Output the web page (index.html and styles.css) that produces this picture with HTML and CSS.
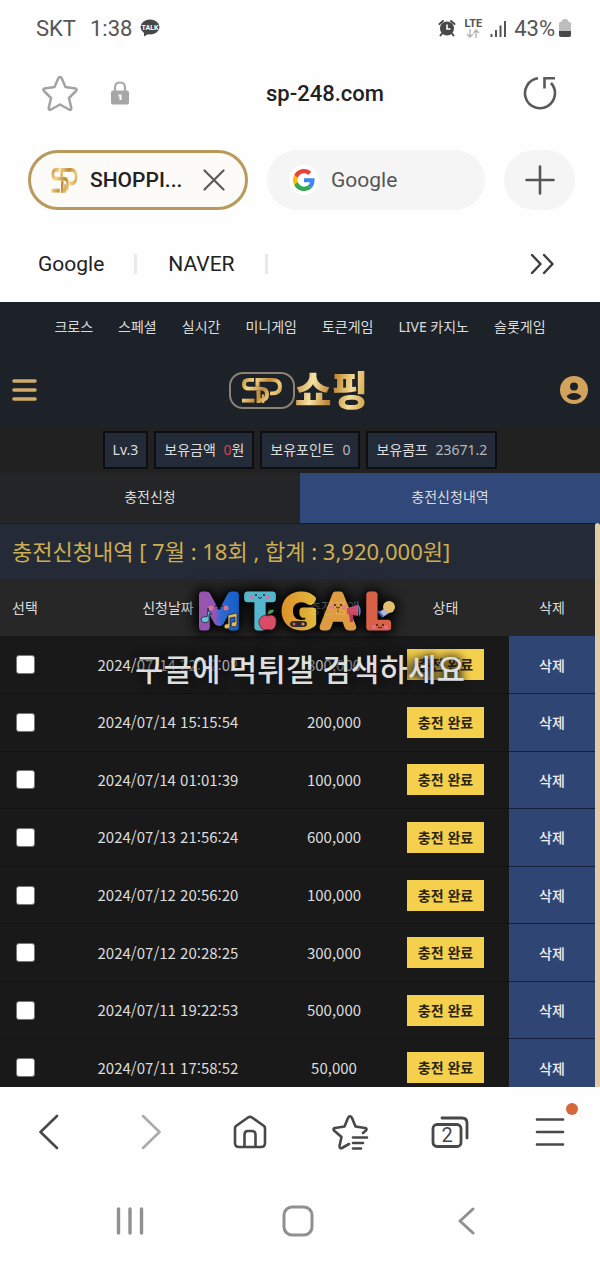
FILE: index.html
```html
<!DOCTYPE html>
<html lang="ko">

<head>
  <meta charset="UTF-8">
  <meta name="viewport" content="width=device-width, initial-scale=1.0">
  <title>SHOPPING</title>

  <link rel="stylesheet" href="styles.css">
</head>

<body>
  <!-- shared logo mark and gradients -->
  <svg class="defs" width="0" height="0" aria-hidden="true">
    <defs>
      <linearGradient id="gold" gradientUnits="userSpaceOnUse" x1="0" y1="0" x2="42" y2="28">
        <stop offset="0" stop-color="#b5812f"/>
        <stop offset=".25" stop-color="#f3d78c"/>
        <stop offset=".5" stop-color="#c08a35"/>
        <stop offset=".7" stop-color="#efcd7c"/>
        <stop offset="1" stop-color="#a8752a"/>
      </linearGradient>
      <symbol id="mark" viewBox="0 0 42 28" preserveAspectRatio="none">
        <g fill="none" stroke="url(#gold)" stroke-width="4">
          <path d="M13 3H8Q3 3 3 7.500Q3 12 8 12H20Q26 12 26 18Q26 24 20 24H19"/>
          <path d="M1 24.500H13.500"/>
          <path d="M16.500 10V3H31Q39 3 39 10Q39 17 31 17H29"/>
          <path d="M17.500 14V27"/>
          <path d="M22 27V18" stroke-width="2.500"/>
        </g>
      </symbol>
    </defs>
  </svg>

  <div class="phone">
    <div class="status-bar">
      <span>SKT</span>
      <span>1:38</span>
      <svg class="talk" width="20" height="18" viewBox="0 0 20 18">
        <ellipse cx="10" cy="8" rx="9.500" ry="7.500" fill="#484848"/>
        <path d="M4 12l0 5.500 5-3z" fill="#484848"/>
        <text x="10" y="10.500" text-anchor="middle">TALK</text>
      </svg>
      <div class="status-right">
        <svg width="18" height="18" viewBox="0 0 18 18">
          <circle cx="9" cy="9.500" r="7" fill="#484848"/>
          <path d="M1.500 5L5 2M16.500 5L13 2M4 14.500L2.500 16.500M14 14.500L15.500 16.500" stroke="#484848" stroke-width="2" stroke-linecap="round"/>
          <path d="M9 5.500V10H12.500" fill="none" stroke="#fff" stroke-width="1.600"/>
        </svg>
        <div class="lte">
          <span>LTE</span>
          <svg width="14" height="9" viewBox="0 0 14 9" fill="none" stroke="#b0b0b0" stroke-width="1.300">
            <path d="M4 0V8M1 5L4 8L7 5M10 9V1M7.500 4L10 1L13 4"/>
          </svg>
        </div>
        <svg width="16" height="17" viewBox="0 0 16 17" stroke="#555" stroke-width="2">
          <path d="M1.500 17V14M6 17V10M10.500 17V5.500M15 17V1"/>
        </svg>
        <span>43%</span>
        <svg width="12" height="18" viewBox="0 0 12 18">
          <path d="M3 2Q3 0 6 0Q9 0 9 2L12 4V12H0V4Z" fill="#bdbdbd"/>
          <path d="M0 12H12V16Q12 18 10 18H2Q0 18 0 16Z" fill="#484848"/>
        </svg>
      </div>
    </div>

    <div class="address-bar">
      <button type="button" aria-label="북마크">
        <svg width="38" height="38" viewBox="0 0 38 38" fill="none" stroke="#a3a3a3" stroke-width="2.500" stroke-linejoin="round">
          <path d="M19 3Q20.200 3 20.800 4.500L24.500 13L34.500 14.500Q36.500 15.200 35 17L28 24L30.300 34Q30.300 36.500 28 35.500L19 30.500L10 35.500Q7.700 36.500 7.700 34L10 24L3 17Q1.500 15.200 3.500 14.500L13.500 13L17.200 4.500Q17.800 3 19 3Z"/>
        </svg>
      </button>
      <svg class="lock" width="18" height="24" viewBox="0 0 18 24">
        <path d="M4 11V6.500Q4 1.500 9 1.500Q14 1.500 14 6.500V11" fill="none" stroke="#a6a6a6" stroke-width="2"/>
        <rect x="0" y="9.500" width="18" height="14" rx="2" fill="#a6a6a6"/>
        <path d="M7.500 14.500H9.500V19" fill="none" stroke="#fff" stroke-width="2"/>
      </svg>
      <span class="url">sp-248.com</span>
      <button type="button" aria-label="새로고침">
        <svg width="36" height="36" viewBox="0 0 36 36" fill="none" stroke="#5a5a5a" stroke-width="2.600">
          <path d="M16 3.300A15 15 0 1 0 29 8"/>
          <path d="M33 3.200H22.500V13.500" stroke-linejoin="miter"/>
        </svg>
      </button>
    </div>

    <div class="browser-tabs">
      <button type="button" class="browser-tab current">
        <svg width="27" height="27"><use href="#mark" width="27" height="27"/></svg>
        <span>SHOPPI...</span>
        <svg class="close" width="22" height="22" viewBox="0 0 22 22" stroke="#5a5a5a" stroke-width="2.200" stroke-linecap="round">
          <path d="M1.500 1.500L20.500 20.500M20.500 1.500L1.500 20.500"/>
        </svg>
      </button>
      <button type="button" class="browser-tab">
        <span class="favicon">
          <svg width="22" height="22" viewBox="0 0 48 48">
            <path fill="#ea4335" d="M24 9.500c3.540 0 6.710 1.220 9.210 3.600l6.850-6.850C35.900 2.380 30.470 0 24 0 14.620 0 6.510 5.380 2.560 13.220l7.980 6.190C12.430 13.720 17.740 9.500 24 9.500z"/>
            <path fill="#4285f4" d="M46.980 24.550c0-1.570-.15-3.090-.38-4.550H24v9.020h12.940c-.58 2.960-2.260 5.480-4.780 7.180l7.730 6c4.510-4.180 7.090-10.360 7.090-17.650z"/>
            <path fill="#fbbc05" d="M10.530 28.590c-.48-1.450-.76-2.990-.76-4.590s.27-3.140.76-4.590l-7.980-6.190C.92 16.460 0 20.120 0 24s.92 7.540 2.560 10.780l7.970-6.190z"/>
            <path fill="#34a853" d="M24 48c6.480 0 11.930-2.130 15.890-5.810l-7.730-6c-2.150 1.450-4.920 2.300-8.160 2.300-6.260 0-11.570-4.220-13.470-9.910l-7.980 6.190C6.510 42.620 14.620 48 24 48z"/>
          </svg>
        </span>
        <span>Google</span>
      </button>
      <button type="button" class="new-tab" aria-label="새 탭">
        <svg width="30" height="30" viewBox="0 0 30 30" stroke="#555" stroke-width="2.600" stroke-linecap="round">
          <path d="M15 1.500V28.500M1.500 15H28.500"/>
        </svg>
      </button>
    </div>

    <div class="bookmarks">
      <a href="#">Google</a>
      <a href="#">NAVER</a>
      <button type="button" aria-label="더보기">
        <svg width="26" height="22" viewBox="0 0 26 22" fill="none" stroke="#3c3c3c" stroke-width="2.400" stroke-linecap="round" stroke-linejoin="round">
          <path d="M3 2L11.500 11L3 20M15 2L23.500 11L15 20"/>
        </svg>
      </button>
    </div>

    <main class="site">
      <nav class="site-nav">
        <a href="#">크로스</a>
        <a href="#">스페셜</a>
        <a href="#">실시간</a>
        <a href="#">미니게임</a>
        <a href="#">토큰게임</a>
        <a href="#">LIVE 카지노</a>
        <a href="#">슬롯게임</a>
      </nav>

      <header class="site-header">
        <button type="button" aria-label="메뉴">
          <svg width="25" height="22" viewBox="0 0 25 22" stroke="#cfac6b" stroke-width="3.600" stroke-linecap="round">
            <path d="M2 2H23M2 11H23M2 20H23"/>
          </svg>
        </button>
        <a href="#" class="logo">
          <span class="logo-mark"><svg width="42" height="27"><use href="#mark" width="42" height="27"/></svg></span>
          <span class="logo-name">쇼핑</span>
        </a>
        <button type="button" aria-label="내 정보">
          <svg width="28" height="28" viewBox="0 0 28 28">
            <circle cx="14" cy="14" r="14" fill="#d3a35c"/>
            <circle cx="14" cy="10.500" r="4" fill="#1d2229"/>
            <path d="M6.500 20.500Q9 17 14 17T21.500 20.500Q18.500 24 14 24T6.500 20.500Z" fill="#1d2229"/>
          </svg>
        </button>
      </header>

      <div class="user-info">
        <span>Lv.3</span>
        <span>보유금액 <b>0</b>원</span>
        <span>보유포인트 <i>0</i></span>
        <span>보유콤프 <i>23671.2</i></span>
      </div>

      <div class="site-tabs">
        <a href="#">충전신청</a>
        <a href="#" class="on">충전신청내역</a>
      </div>

      <section class="history">
        <div class="history-body">
          <h1>충전신청내역 [ 7월 : 18회 , 합계 : 3,920,000원]</h1>
          <table>
            <colgroup>
              <col class="col-check">
              <col class="col-date">
              <col class="col-amount">
              <col class="col-state">
              <col class="col-delete">
            </colgroup>
            <thead>
              <tr>
                <th>선택</th>
                <th>신청날짜</th>
                <th>충전금액</th>
                <th>상태</th>
                <th>삭제</th>
              </tr>
            </thead>
            <tbody>
              <tr>
                <td><input type="checkbox" aria-label="선택 1"></td>
                <td>2024/07/14 22:12:02</td>
                <td>800,000</td>
                <td><span class="done">충전 완료</span></td>
                <td class="delete"><button type="button">삭제</button></td>
              </tr>
              <tr>
                <td><input type="checkbox" aria-label="선택 2"></td>
                <td>2024/07/14 15:15:54</td>
                <td>200,000</td>
                <td><span class="done">충전 완료</span></td>
                <td class="delete"><button type="button">삭제</button></td>
              </tr>
              <tr>
                <td><input type="checkbox" aria-label="선택 3"></td>
                <td>2024/07/14 01:01:39</td>
                <td>100,000</td>
                <td><span class="done">충전 완료</span></td>
                <td class="delete"><button type="button">삭제</button></td>
              </tr>
              <tr>
                <td><input type="checkbox" aria-label="선택 4"></td>
                <td>2024/07/13 21:56:24</td>
                <td>600,000</td>
                <td><span class="done">충전 완료</span></td>
                <td class="delete"><button type="button">삭제</button></td>
              </tr>
              <tr>
                <td><input type="checkbox" aria-label="선택 5"></td>
                <td>2024/07/12 20:56:20</td>
                <td>100,000</td>
                <td><span class="done">충전 완료</span></td>
                <td class="delete"><button type="button">삭제</button></td>
              </tr>
              <tr>
                <td><input type="checkbox" aria-label="선택 6"></td>
                <td>2024/07/12 20:28:25</td>
                <td>300,000</td>
                <td><span class="done">충전 완료</span></td>
                <td class="delete"><button type="button">삭제</button></td>
              </tr>
              <tr>
                <td><input type="checkbox" aria-label="선택 7"></td>
                <td>2024/07/11 19:22:53</td>
                <td>500,000</td>
                <td><span class="done">충전 완료</span></td>
                <td class="delete"><button type="button">삭제</button></td>
              </tr>
              <tr>
                <td><input type="checkbox" aria-label="선택 8"></td>
                <td>2024/07/11 17:58:52</td>
                <td>50,000</td>
                <td><span class="done">충전 완료</span></td>
                <td class="delete"><button type="button">삭제</button></td>
              </tr>
            </tbody>
          </table>
        </div>
        <div class="scrollbar"></div>

        <div class="watermark">
          <svg width="206" height="50" viewBox="0 0 206 50">
            <defs>
              <linearGradient id="letter-m">
                <stop offset="0" stop-color="#a457b8"/>
                <stop offset=".4" stop-color="#9a5cc4"/>
                <stop offset=".55" stop-color="#2f6fe0"/>
                <stop offset="1" stop-color="#0f63d6"/>
              </linearGradient>
              <linearGradient id="letter-g">
                <stop offset="0" stop-color="#ee9a2c"/>
                <stop offset="1" stop-color="#f0c63c"/>
              </linearGradient>
            </defs>
            <g class="letters">
              <text x="22" y="42" fill="url(#letter-m)" stroke="url(#letter-m)">M</text>
              <text x="63" y="42" fill="#58c3dc" stroke="#58c3dc">T</text>
              <text x="102" y="42" fill="url(#letter-g)" stroke="url(#letter-g)">G</text>
              <text x="141" y="42" fill="#eda545" stroke="#eda545">A</text>
              <text x="180" y="42" fill="#e8664a" stroke="#e8664a">L</text>
            </g>
            <!-- faces -->
            <g fill="#2a1c2c">
              <circle cx="19" cy="21" r="1"/><circle cx="25" cy="21" r="1"/>
              <circle cx="59" cy="10" r="1"/><circle cx="67" cy="10" r="1"/>
              <circle cx="138" cy="20" r="1"/><circle cx="144" cy="20" r="1"/>
              <circle cx="180" cy="40" r="1"/><circle cx="186" cy="40" r="1"/>
            </g>
            <g fill="#f0789a">
              <circle cx="14" cy="23" r="2.500"/><circle cx="29" cy="23" r="2.500"/>
              <circle cx="55" cy="12" r="2"/><circle cx="71" cy="12" r="2"/>
              <circle cx="135" cy="22" r="2"/><circle cx="147" cy="22" r="2"/>
              <circle cx="177" cy="42" r="2"/><circle cx="189" cy="42" r="2"/>
            </g>
            <g fill="none" stroke="#2a1c2c">
              <path d="M20 23q2 3 4 0M61 12q2 3 4 0M139 22q2 2 4 0M181 42q2 2 4 0"/>
            </g>
            <!-- music notes -->
            <g stroke="#1c2430" stroke-width=".8">
              <path d="M11 23q0 5 4 6q-3 0-3 0v5a4 3 0 1 1-2-2z" fill="#67d4ea"/>
              <path d="M31 30l9-2v11a3 2.500 0 1 1-2-2v-5l-5 1v8a3 2.500 0 1 1-2-2z" fill="#f5c860"/>
            </g>
            <!-- apple -->
            <path d="M71 31q-4-2-7 1t-2 7q2 6 6 6q3-1 5 0q5 0 6-6t-2-8q-3-2-6 0z" fill="#e8506c" stroke="#3a1520" stroke-width=".6"/>
            <path d="M71 31q0-5 2-7" stroke="#5a3020" stroke-width="1.500" fill="none"/>
            <path d="M71 29q1-5 6-4q-1 4-6 4z" fill="#49b35c"/>
            <!-- gamepad -->
            <path d="M93 39q0-3 4-3h9q4 0 4 3t-4 3h-9q-4 0-4-3z" fill="#2e2a30"/>
            <circle cx="97" cy="39" r="1.500" fill="#e95a4a"/><circle cx="106" cy="39" r="1.500" fill="#e9a34a"/>
            <!-- megaphone -->
            <path d="M150 23l11-3v11l-11-2z" fill="#d8486c"/>
            <path d="M161 19q5 6 1 13z" fill="#6a86d8"/>
            <path d="M152 29l1 8 3 0 0-7z" fill="#c43c60"/>
            <!-- light bulb -->
            <circle cx="192" cy="22" r="6" fill="#f3cb74"/>
            <path d="M187 24l-5 3 4 5 6-4z" fill="#b9c4e8"/>
            <path d="M181 26l5 6" stroke="#4468c0" stroke-width="2"/>
          </svg>
          <p>구글에 먹튀갤 검색하세요</p>
        </div>
      </section>
    </main>

    <div class="toolbar">
      <button type="button" aria-label="뒤로">
        <svg width="22" height="36" viewBox="0 0 22 36" fill="none" stroke="#484848" stroke-width="2.600" stroke-linecap="round" stroke-linejoin="round">
          <path d="M18 2L1.500 18L18 34"/>
        </svg>
      </button>
      <button type="button" aria-label="앞으로">
        <svg width="22" height="36" viewBox="0 0 22 36" fill="none" stroke="#ababab" stroke-width="2.600" stroke-linecap="round" stroke-linejoin="round">
          <path d="M4 2L20.500 18L4 34"/>
        </svg>
      </button>
      <button type="button" aria-label="홈">
        <svg width="34" height="34" viewBox="0 0 34 34" fill="none" stroke="#484848" stroke-width="2.600" stroke-linejoin="round">
          <path d="M2 13Q2 12 3 11L15 2.500Q17 1.200 19 2.500L31 11Q32 12 32 13V28Q32 32 28 32H6Q2 32 2 28Z"/>
          <path d="M11.500 32V20Q11.500 16 15 16H19Q22.500 16 22.500 20V32"/>
        </svg>
      </button>
      <button type="button" aria-label="북마크 목록">
        <svg width="38" height="36" viewBox="0 0 38 36" fill="none" stroke="#484848" stroke-width="2.600" stroke-linecap="round" stroke-linejoin="round">
          <path d="M18 30L11 34Q8.500 35 8.500 32L10.500 23L3 16.500Q1.500 14.500 4 14L13.500 12.500L17 4Q19 0.500 21 4L24.500 12.500L34 14Q36.500 14.500 35 16.500L32 19"/>
          <path d="M22 23.500H36M22 29H32M22 34.500H30"/>
        </svg>
      </button>
      <button type="button" aria-label="탭 2개" class="tab-count">
        <svg width="38" height="34" viewBox="0 0 38 34" fill="none" stroke="#484848" stroke-width="2.800" stroke-linecap="round">
          <rect x="2" y="9.500" width="28" height="22" rx="4"/>
          <path d="M11 3H31Q36 3 36 8V23"/>
          <text x="16" y="27" text-anchor="middle">2</text>
        </svg>
      </button>
      <button type="button" aria-label="메뉴" class="menu">
        <svg width="30" height="30" viewBox="0 0 30 30" stroke="#484848" stroke-width="2.600" stroke-linecap="round">
          <path d="M2 2.500H28M2 15H28M2 27.500H28"/>
        </svg>
        <span class="dot"></span>
      </button>
    </div>

    <div class="system-nav">
      <button type="button" aria-label="최근 앱">
        <svg width="28" height="30" viewBox="0 0 28 30" stroke="#909090" stroke-width="3.400" stroke-linecap="round">
          <path d="M2.500 3V27M14 3V27M25.500 3V27"/>
        </svg>
      </button>
      <button type="button" aria-label="홈 화면">
        <svg width="32" height="32" viewBox="0 0 32 32" fill="none" stroke="#909090" stroke-width="3">
          <rect x="2" y="2" width="28" height="28" rx="8"/>
        </svg>
      </button>
      <button type="button" aria-label="뒤로 가기">
        <svg width="18" height="30" viewBox="0 0 18 30" fill="none" stroke="#909090" stroke-width="3" stroke-linecap="round" stroke-linejoin="round">
          <path d="M16 3L3 15L16 27"/>
        </svg>
      </button>
    </div>
  </div>
</body>

</html>
```
FILE: styles.css
```css
* {
  box-sizing: border-box;
}

body {
  margin: 0;
  background-color: #fefefe;
  color: #222;
  font-family: Roboto, "Noto Sans CJK KR", sans-serif;
}

button {
  display: flex;
  justify-content: center;
  align-items: center;
  margin: 0;
  padding: 0;
  border: none;
  background: none;
  color: inherit;
  font: inherit;
}

a {
  color: inherit;
  text-decoration: none;
}

.defs {
  position: absolute;
}

.phone {
  display: flex;
  flex-direction: column;
  height: 100vh;
}

/* phone status bar */
.status-bar {
  display: flex;
  align-items: center;
  flex: none;
  gap: 14px;
  height: 56px;
  padding: 0 29px 0 36px;
  color: #555;
  font-size: 22px;
}

.talk {
  margin-left: -6px;
}

.talk text {
  fill: #fff;
  font-size: 7px;
  font-weight: bold;
}

.status-right {
  display: flex;
  align-items: center;
  gap: 8px;
  margin-left: auto;
}

.status-right > span {
  margin-right: -4px;
}

.lte {
  display: flex;
  flex-direction: column;
  align-items: center;
  font-size: 11px;
  font-weight: bold;
  line-height: 10px;
}

/* browser */
.address-bar {
  display: flex;
  align-items: center;
  flex: none;
  height: 74px;
  padding: 0 42px 0 41px;
}

.lock {
  margin-left: 32px;
}

.url {
  flex: 1;
  padding-right: 1px;
  text-align: center;
  font-size: 22px;
  font-weight: 500;
}

.browser-tabs {
  display: flex;
  align-items: center;
  flex: none;
  gap: 19px;
  height: 100px;
  padding: 0 25px 0 28px;
}

.browser-tab {
  flex: 1 1 0;
  justify-content: flex-start;
  gap: 12px;
  height: 60px;
  padding: 0 22px;
  border-radius: 30px;
  background-color: #f5f5f5;
  color: #555;
  font-size: 21px;
}

.browser-tab.current {
  padding: 0 20px;
  border: 3px solid #b89a5a;
  background-color: #fcfbf8;
  color: #222;
  font-weight: 500;
}

.close {
  margin-left: auto;
}

.favicon {
  display: flex;
  justify-content: center;
  align-items: center;
  border-radius: 50%;
  background-color: #fff;
  width: 30px;
  height: 30px;
}

.new-tab {
  border-radius: 36px;
  background-color: #f5f5f5;
  width: 71px;
  height: 60px;
}

.bookmarks {
  display: flex;
  align-items: center;
  flex: none;
  height: 72px;
  padding: 0 45px 4px 38px;
  font-size: 21px;
}

.bookmarks a {
  margin-right: 31px;
  border-right: 3px solid #e9e9e9;
  padding-right: 30px;
  line-height: 20px;
}

.bookmarks button {
  margin-left: auto;
}

/* site */
.site {
  display: flex;
  flex-direction: column;
  flex: 1;
  min-height: 0;
  overflow: hidden;
  background-color: #1d2229;
  color: #dcdcdc;
  font-family: "Noto Sans", "Noto Sans CJK KR", sans-serif;
  font-size: 14px;
  line-height: 20px;
}

.site-nav {
  display: flex;
  justify-content: center;
  align-items: center;
  flex: none;
  gap: 25px;
  height: 50px;
}

.site-header {
  display: flex;
  justify-content: space-between;
  align-items: center;
  flex: none;
  height: 76px;
  padding: 0 12px;
}

.logo {
  display: flex;
  align-items: center;
}

.logo-mark {
  display: flex;
  justify-content: center;
  align-items: center;
  border: 2px solid #8a8272;
  border-radius: 14px;
  width: 66px;
  height: 37px;
}

.logo-name {
  background: linear-gradient(100deg, #c08a35, #f7e3a5 25%, #b9802b 50%, #f5dc94 75%, #c9953f);
  background-clip: text;
  -webkit-background-clip: text;
  color: transparent;
  font-size: 40px;
  font-weight: 900;
  line-height: 40px;
}

.user-info {
  display: flex;
  justify-content: center;
  align-items: center;
  flex: none;
  gap: 6px;
  height: 45px;
  padding-bottom: 2px;
  background-color: #212121;
}

.user-info span {
  border: 2px solid #0c0e12;
  background-color: #242b38;
  padding: 7px 8px;
}

.user-info b {
  margin-left: 4px;
  color: #d8424a;
  font-weight: normal;
}

.user-info i {
  margin-left: 4px;
  color: #b4b8be;
  font-style: normal;
}

.site-tabs {
  display: flex;
  flex: none;
  background-color: #232527;
}

.site-tabs a {
  flex: 1;
  height: 50px;
  text-align: center;
  line-height: 48px;
}

.site-tabs .on {
  background-color: #31487a;
}

.history {
  position: relative;
  display: flex;
  flex: 1;
  min-height: 0;
}

.history-body {
  flex: 1;
  overflow: hidden;
}

.scrollbar {
  border-radius: 3px 3px 0 0;
  background-color: #e3cba8;
  width: 5px;
}

h1 {
  margin: 0;
  border-top: 1px solid #191c22;
  background-color: #242b37;
  padding: 0 12px;
  color: #cfae50;
  font-size: 22px;
  font-weight: normal;
  line-height: 55px;
}

table {
  border-collapse: collapse;
  table-layout: fixed;
  width: 100%;
  height: 518px;
  background-color: #191919;
}

.col-check {
  width: 50px;
}

.col-amount {
  width: 96px;
}

.col-state {
  width: 127px;
}

.col-delete {
  width: 86px;
}

th,
td {
  height: 57px;
  padding: 0;
  text-align: center;
}

th {
  background-color: #272727;
  font-weight: normal;
}

td {
  border-bottom: 1px solid #121212;
  font-family: "Noto Sans CJK KR", sans-serif;
  font-size: 15px;
}

input[type="checkbox"] {
  display: block;
  appearance: none;
  margin: 0 auto;
  border: 1px solid #777;
  border-radius: 3px;
  background-color: #fff;
  width: 19px;
  height: 19px;
}

.done {
  display: inline-block;
  background-color: #f5d04c;
  padding: 0 11px;
  color: #2b2410;
  font-size: 14px;
  font-weight: bold;
  line-height: 31px;
}

.delete {
  border-bottom-color: #16203a;
  background-color: #2f4675;
  font-size: 14px;
}

.delete button {
  width: 100%;
  height: 100%;
  color: #f0f0f0;
  font-weight: 500;
}

/* banner lying over the table */
.watermark {
  position: absolute;
  top: 62px;
  right: 0;
  left: 0;
  text-align: center;
  pointer-events: none;
}

.watermark svg {
  display: block;
  margin: 0 auto;
  filter: drop-shadow(0 0 8px #000) drop-shadow(0 0 4px #000);
  overflow: visible;
  opacity: .92;
}

.letters text {
  font-family: Lato, sans-serif;
  font-size: 44px;
  text-anchor: middle;
  stroke-width: 7px;
  stroke-linejoin: round;
}

.watermark p {
  margin: 12px 0 0;
  color: #dedede;
  font-size: 31px;
  font-weight: 500;
  line-height: 44px;
  text-shadow: 0 0 8px #111, 0 0 10px #111;
}

/* bottom bars */
.toolbar {
  display: grid;
  grid-template-columns: repeat(6, 1fr);
  flex: none;
  height: 90px;
}

.tab-count text {
  fill: #484848;
  stroke: none;
  font-size: 20px;
}

.menu {
  position: relative;
}

.dot {
  position: absolute;
  top: 16px;
  right: 22px;
  border-radius: 50%;
  background-color: #d4683a;
  width: 12px;
  height: 12px;
}

.system-nav {
  display: grid;
  grid-template-columns: repeat(3, 1fr);
  flex: none;
  height: 90px;
  padding: 0 50px 2px 46px;
}
```
